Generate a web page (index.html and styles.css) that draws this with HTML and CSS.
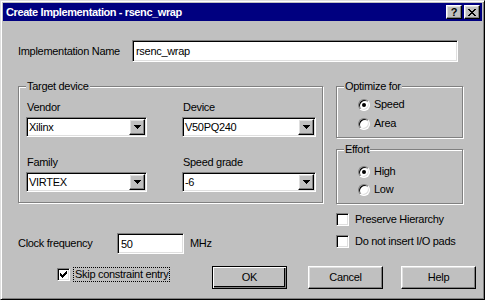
FILE: index.html
```html
<!DOCTYPE html>
<html>
<head>
<meta charset="utf-8">
<link rel="stylesheet" href="styles.css">
</head>
<body>
<div class="window">
  <div class="titlebar">
    <span class="title">Create Implementation - rsenc_wrap</span>
    <div class="tbtns">
      <span class="tbtn raised help">?</span>
      <span class="tbtn raised close"><svg width="8" height="7" viewBox="0 0 8 7"><path d="M0 0h2v1H0zM6 0h2v1H6zM1 1h2v1H1zM5 1h2v1H5zM2 2h4v1H2zM3 3h2v1H3zM2 4h4v1H2zM1 5h2v1H1zM5 5h2v1H5zM0 6h2v1H0zM6 6h2v1H6z" fill="#000"/></svg></span>
    </div>
  </div>
  <div class="content">
    <div class="row-name">
      <span class="name-label">Implementation Name</span>
      <div class="sunken name-field">rsenc_wrap</div>
    </div>
    <div class="main">
      <div class="col-left">
        <div class="group target">
          <div class="group-title">Target device</div>
          <div class="target-grid">
            <div class="cell">
              <div class="lbl">Vendor</div>
              <div class="sunken combo narrow"><span class="combo-text">Xilinx</span><span class="raised combo-btn"><svg width="7" height="4" viewBox="0 0 7 4"><path d="M0 0h7v1H0zM1 1h5v1H1zM2 2h3v1H2zM3 3h1v1H3z" fill="#000"/></svg></span></div>
            </div>
            <div class="cell">
              <div class="lbl">Device</div>
              <div class="sunken combo wide"><span class="combo-text">V50PQ240</span><span class="raised combo-btn"><svg width="7" height="4" viewBox="0 0 7 4"><path d="M0 0h7v1H0zM1 1h5v1H1zM2 2h3v1H2zM3 3h1v1H3z" fill="#000"/></svg></span></div>
            </div>
            <div class="cell">
              <div class="lbl">Family</div>
              <div class="sunken combo narrow"><span class="combo-text">VIRTEX</span><span class="raised combo-btn"><svg width="7" height="4" viewBox="0 0 7 4"><path d="M0 0h7v1H0zM1 1h5v1H1zM2 2h3v1H2zM3 3h1v1H3z" fill="#000"/></svg></span></div>
            </div>
            <div class="cell">
              <div class="lbl">Speed grade</div>
              <div class="sunken combo wide"><span class="combo-text">-6</span><span class="raised combo-btn"><svg width="7" height="4" viewBox="0 0 7 4"><path d="M0 0h7v1H0zM1 1h5v1H1zM2 2h3v1H2zM3 3h1v1H3z" fill="#000"/></svg></span></div>
            </div>
          </div>
        </div>
        <div class="clock-row">
          <span class="clock-label">Clock frequency</span>
          <div class="sunken clock-field">50</div>
          <span class="unit">MHz</span>
        </div>
      </div>
      <div class="col-right">
        <div class="group optimize">
          <div class="group-title">Optimize for</div>
          <div class="radios opt-radios">
            <div class="radio-row"><span class="radio"><span class="dot"></span></span><span>Speed</span></div>
            <div class="radio-row"><span class="radio"></span><span>Area</span></div>
          </div>
        </div>
        <div class="group effort">
          <div class="group-title">Effort</div>
          <div class="radios eff-radios">
            <div class="radio-row"><span class="radio"><span class="dot"></span></span><span>High</span></div>
            <div class="radio-row"><span class="radio"></span><span>Low</span></div>
          </div>
        </div>
        <div class="check-row first"><span class="sunken check"></span><span>Preserve Hierarchy</span></div>
        <div class="check-row"><span class="sunken check"></span><span>Do not insert I/O pads</span></div>
      </div>
    </div>
    <div class="bottom-row">
      <div class="skip">
        <span class="sunken check"><svg width="7" height="7" viewBox="0 0 7 7"><path d="M6 0h1v1H6zM5 1h2v1H5zM0 2h1v1H0zM4 2h3v1H4zM0 3h2v1H0zM3 3h3v1H3zM0 4h5v1H0zM1 5h3v1H1zM2 6h1v1H2z" fill="#000"/></svg></span>
        <span class="focus">Skip constraint entry</span>
      </div>
      <div class="btn raised default">OK</div>
      <div class="btn raised cancel">Cancel</div>
      <div class="btn raised helpbtn">Help</div>
    </div>
  </div>
</div>
</body>
</html>
```

FILE: styles.css
```css
* { box-sizing: border-box; }
html, body { margin: 0; padding: 0; background: #c0c0c0; }
body {
  font-family: "Liberation Sans", Arial, sans-serif;
  font-size: 11px;
  line-height: 13px;
  letter-spacing: -0.3px;
  color: #000;
}
.window {
  width: 485px;
  height: 300px;
  background: #c0c0c0;
  border: 1px solid;
  border-color: #dfdfdf #000 #000 #dfdfdf;
  box-shadow: inset 1px 1px #fff, inset -1px -1px #808080;
  padding: 2px;
}
.titlebar {
  height: 18px;
  background: #000080;
  display: flex;
  align-items: center;
  justify-content: space-between;
  padding: 0 2px 0 3px;
}
.title {
  color: #fff;
  font-weight: bold;
  font-size: 11px;
  letter-spacing: -0.4px;
}
.tbtns { display: flex; gap: 2px; }
.tbtn {
  width: 16px;
  height: 14px;
  display: flex;
  align-items: center;
  justify-content: center;
  font-weight: bold;
  font-size: 11px;
  line-height: 12px;
  letter-spacing: 0;
}
.raised {
  background: #c0c0c0;
  border: 1px solid;
  border-color: #fff #000 #000 #fff;
  box-shadow: inset -1px -1px #808080, inset 1px 1px #dfdfdf;
}
.sunken {
  background: #fff;
  border: 1px solid;
  border-color: #808080 #fff #fff #808080;
  box-shadow: inset 1px 1px #000, inset -1px -1px #dfdfdf;
}
.content { padding-left: 15px; }
.row-name {
  margin-top: 19px;
  display: flex;
  align-items: center;
  height: 22px;
}
.name-label { width: 114px; }
.name-field {
  width: 326px;
  height: 22px;
  padding: 4px 0 0 3px;
}
.main {
  margin-top: 24px;
  display: flex;
  gap: 13px;
}
.col-left { width: 305px; }
.col-right { width: 127px; }
.group {
  border: 1px solid #808080;
  box-shadow: inset 1px 1px #fff, 1px 1px #fff;
}
.group-title {
  width: fit-content;
  height: 13px;
  margin: -7px 0 0 7px;
  padding: 0 1px;
  background: #c0c0c0;
}
.target { height: 117px; }
.target-grid {
  margin-top: 8px;
  padding-left: 7px;
  display: grid;
  grid-template-columns: 121px 134px;
  column-gap: 35px;
  row-gap: 19px;
}
.lbl { padding-left: 1px; height: 13px; margin-bottom: 3px; }
.combo {
  height: 20px;
  display: flex;
  align-items: center;
  justify-content: space-between;
  padding: 0 1px 0 2px;
}
.combo.narrow { width: 121px; }
.combo.wide { width: 134px; }
.combo-btn {
  width: 16px;
  height: 16px;
  display: flex;
  align-items: center;
  justify-content: center;
}
.combo-btn svg { display: block; }
.clock-row {
  margin-top: 30px;
  height: 21px;
  display: flex;
  align-items: center;
}
.clock-label { width: 99px; }
.clock-field {
  width: 67px;
  height: 21px;
  padding: 4px 0 0 3px;
}
.unit { margin-left: 6px; }
.optimize { height: 52px; }
.effort { height: 55px; margin-top: 11px; }
.radios {
  padding-left: 21px;
  display: flex;
  flex-direction: column;
}
.opt-radios { margin-top: 5px; gap: 6px; }
.eff-radios { margin-top: 9px; gap: 5px; }
.radio-row {
  display: flex;
  align-items: center;
  gap: 4px;
  height: 13px;
}
.radio {
  width: 12px;
  height: 12px;
  border-radius: 50%;
  background: #fff;
  border: 1px solid;
  border-color: #808080 #fff #fff #808080;
  box-shadow: inset 1px 1px #000, inset -1px -1px #dfdfdf;
  display: grid;
  place-items: center;
}
.dot {
  width: 4px;
  height: 4px;
  border-radius: 50%;
  background: #000;
}
.check-row {
  display: flex;
  align-items: center;
  gap: 6px;
  height: 13px;
  margin-top: 9px;
}
.check {
  width: 13px;
  height: 13px;
  display: flex;
  align-items: center;
  justify-content: center;
  flex: none;
}
.check svg { display: block; }
.bottom-row {
  margin-top: 12px;
  display: flex;
  align-items: flex-start;
  padding-left: 39px;
}
.skip {
  width: 155px;
  margin-top: 1px;
  display: flex;
  align-items: center;
  gap: 3px;
}
.focus {
  border: 1px dotted #000;
  padding: 0 1px;
  line-height: 13px;
}
.btn {
  width: 75px;
  height: 23px;
  display: flex;
  align-items: center;
  justify-content: center;
}
.btn.default {
  border: 1px solid #000;
  box-shadow: inset 1px 1px #fff, inset -1px -1px #808080, inset -2px -2px #000;
}
.cancel { margin-left: 21px; }
.helpbtn { margin-left: 18px; }
```
